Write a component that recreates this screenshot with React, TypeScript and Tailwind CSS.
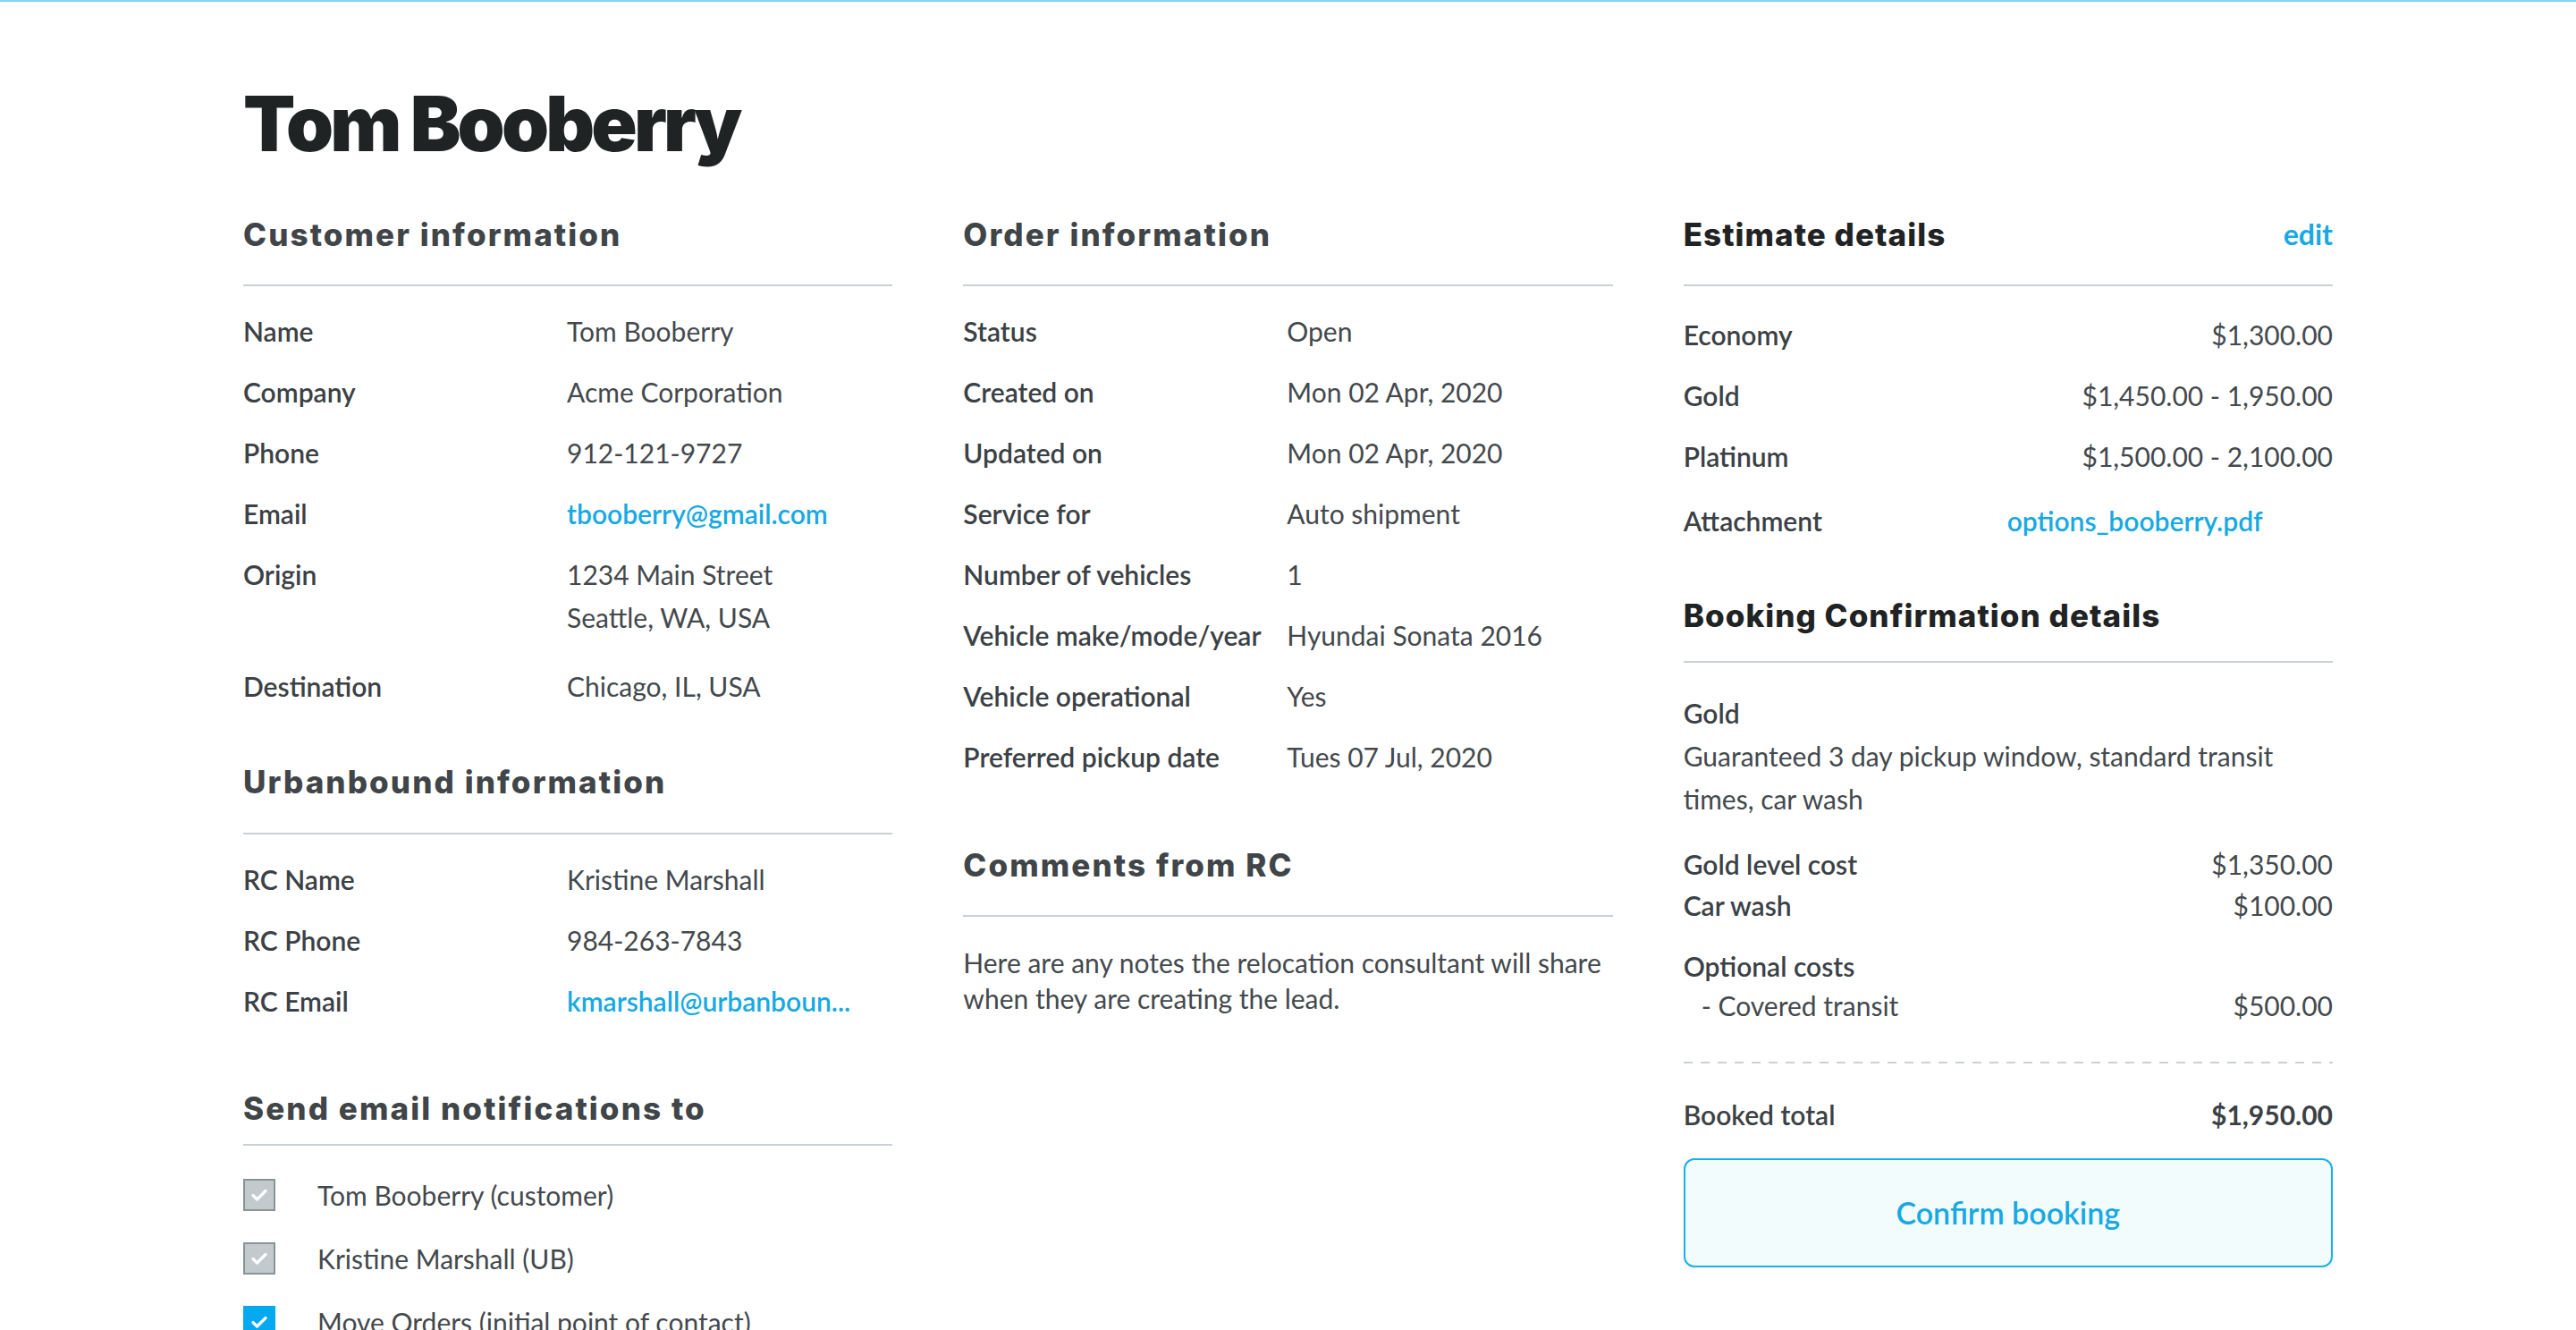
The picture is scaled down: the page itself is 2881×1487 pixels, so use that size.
import React from 'react';

const body = "font-['Lato','Noto_Sans',sans-serif]";
const head = "font-['Inter','Noto_Sans',sans-serif]";

const Heading: React.FC<{ children: React.ReactNode; dark?: boolean; pb?: string; right?: React.ReactNode }> = ({
    children,
    dark,
    pb = 'pb-[34px]',
    right,
}) => (
    <div className={`flex items-center justify-between border-b-2 border-[#c9d1d5] ${pb}`}>
        <h2
            className={`${head} text-[35px] leading-[44px] font-extrabold ${
                dark ? 'tracking-[0.03em] text-[#1f2324]' : 'tracking-[0.06em] text-[#3f4548]'
            }`}
        >
            {children}
        </h2>
        {right}
    </div>
);

const Row: React.FC<{ label: string; children: React.ReactNode; className?: string }> = ({ label, children, className = '' }) => (
    <div className={`grid grid-cols-[362px_1fr] ${className}`}>
        <div className="font-semibold text-[#3b4145]">{label}</div>
        <div className="font-normal text-[#43494d]">{children}</div>
    </div>
);

const Money: React.FC<{ label: string; value: string; bold?: boolean; className?: string }> = ({ label, value, bold, className = '' }) => (
    <div className={`flex justify-between ${className}`}>
        <span className="font-semibold text-[#3b4145]">{label}</span>
        <span className={bold ? 'font-bold text-[#3b4145]' : 'font-normal text-[#43494d]'}>{value}</span>
    </div>
);

const Checkbox: React.FC<{ blue?: boolean; label: string }> = ({ blue, label }) => (
    <div className="flex items-center h-[36px]">
        <span
            className={`flex items-center justify-center w-[36px] h-[36px] border-2 ${
                blue ? 'bg-[#04a9ef] border-[#04a9ef]' : 'bg-[#c2cacd] border-[#899296]'
            }`}
        >
            <svg width="22" height="22" viewBox="0 0 22 22" fill="none">
                <path d="M4 11.5l4.5 4.5L18 6.5" stroke="white" strokeWidth="3.2" strokeLinecap="round" strokeLinejoin="round" />
            </svg>
        </span>
        <span className="ml-[47px] font-normal text-[#43494d]">{label}</span>
    </div>
);

const link = 'font-semibold text-[#17a9e3]';

export default function App() {
    return (
        <div className={`min-h-screen bg-white border-t-2 border-[#7fd4f7] ${body} text-[30px] leading-[48px]`}>
            <div className="mx-auto w-[2337px] pt-[87px] pb-[60px]">
                <h1 className={`${head} text-[85px] leading-[100px] font-black tracking-[-0.045em] text-[#1f2324]`}>
                    Tom Booberry
                </h1>

                <div className="grid grid-cols-3 gap-x-[79px] mt-[51px]">
                    {/* Customer column */}
                    <div>
                        <Heading>Customer information</Heading>
                        <div className="mt-[26px] flex flex-col gap-[20px]">
                            <Row label="Name">Tom Booberry</Row>
                            <Row label="Company">Acme Corporation</Row>
                            <Row label="Phone">912-121-9727</Row>
                            <Row label="Email">
                                <span className={link}>tbooberry@gmail.com</span>
                            </Row>
                            <Row label="Origin" className="mb-[9px]">
                                1234 Main Street
                                <br />
                                Seattle, WA, USA
                            </Row>
                            <Row label="Destination">Chicago, IL, USA</Row>
                        </div>

                        <div className="mt-[61px]">
                            <Heading pb="pb-[35px]">Urbanbound information</Heading>
                        </div>
                        <div className="mt-[26px] flex flex-col gap-[20px]">
                            <Row label="RC Name">Kristine Marshall</Row>
                            <Row label="RC Phone">984-263-7843</Row>
                            <Row label="RC Email">
                                <span className={link}>kmarshall@urbanboun...</span>
                            </Row>
                        </div>

                        <div className="mt-[74px]">
                            <Heading pb="pb-[18px]">Send email notifications to</Heading>
                        </div>
                        <div className="mt-[37px] flex flex-col gap-[35px]">
                            <Checkbox label="Tom Booberry (customer)" />
                            <Checkbox label="Kristine Marshall (UB)" />
                            <Checkbox blue label="Move Orders (initial point of contact)" />
                        </div>
                    </div>

                    {/* Order column */}
                    <div>
                        <Heading>Order information</Heading>
                        <div className="mt-[26px] flex flex-col gap-[20px]">
                            <Row label="Status">Open</Row>
                            <Row label="Created on">Mon 02 Apr, 2020</Row>
                            <Row label="Updated on">Mon 02 Apr, 2020</Row>
                            <Row label="Service for">Auto shipment</Row>
                            <Row label="Number of vehicles">1</Row>
                            <Row label="Vehicle make/mode/year">Hyundai Sonata 2016</Row>
                            <Row label="Vehicle operational">Yes</Row>
                            <Row label="Preferred pickup date">Tues 07 Jul, 2020</Row>
                        </div>

                        <div className="mt-[75px]">
                            <Heading>Comments from RC</Heading>
                        </div>
                        <p className="mt-[31px] leading-[40px] font-normal text-[#43494d]">
                            Here are any notes the relocation consultant will share when they are creating the lead.
                        </p>
                    </div>

                    {/* Estimate column */}
                    <div>
                        <Heading dark right={<a className="font-bold text-[32px] leading-[44px] text-[#17a9e3]">edit</a>}>
                            Estimate details
                        </Heading>
                        <div className="mt-[30px] flex flex-col gap-[20px]">
                            <Money label="Economy" value="$1,300.00" />
                            <Money label="Gold" value="$1,450.00 - 1,950.00" />
                            <Money label="Platinum" value="$1,500.00 - 2,100.00" />
                            <Row label="Attachment" className="mt-[4px]">
                                <span className={link}>options_booberry.pdf</span>
                            </Row>
                        </div>

                        <div className="mt-[60px]">
                            <Heading dark pb="pb-[29px]">
                                Booking Confirmation details
                            </Heading>
                        </div>
                        <div className="mt-[32px]">
                            <div className="font-semibold text-[#3b4145]">Gold</div>
                            <p className="font-normal text-[#43494d]">Guaranteed 3 day pickup window, standard transit times, car wash</p>
                        </div>

                        <div className="mt-[26px] leading-[46px]">
                            <Money label="Gold level cost" value="$1,350.00" />
                            <Money label="Car wash" value="$100.00" />
                        </div>

                        <div className="mt-[23px] leading-[44px]">
                            <div className="font-semibold text-[#3b4145]">Optional costs</div>
                            <div className="flex justify-between font-normal text-[#43494d]">
                                <span className="pl-[20px]">- Covered transit</span>
                                <span>$500.00</span>
                            </div>
                        </div>

                        <div className="mt-[41px] h-[2px] bg-[repeating-linear-gradient(to_right,#c9d1d5_0_10px,transparent_10px_19px)]" />

                        <Money label="Booked total" value="$1,950.00" bold className="mt-[33px]" />

                        <button className="mt-[25px] w-full h-[122px] rounded-[12px] border-2 border-[#17b0ee] bg-[#f3fcfd] text-[34px] font-semibold text-[#17a9e3]">
                            Confirm booking
                        </button>
                    </div>
                </div>
            </div>
        </div>
    );
}
